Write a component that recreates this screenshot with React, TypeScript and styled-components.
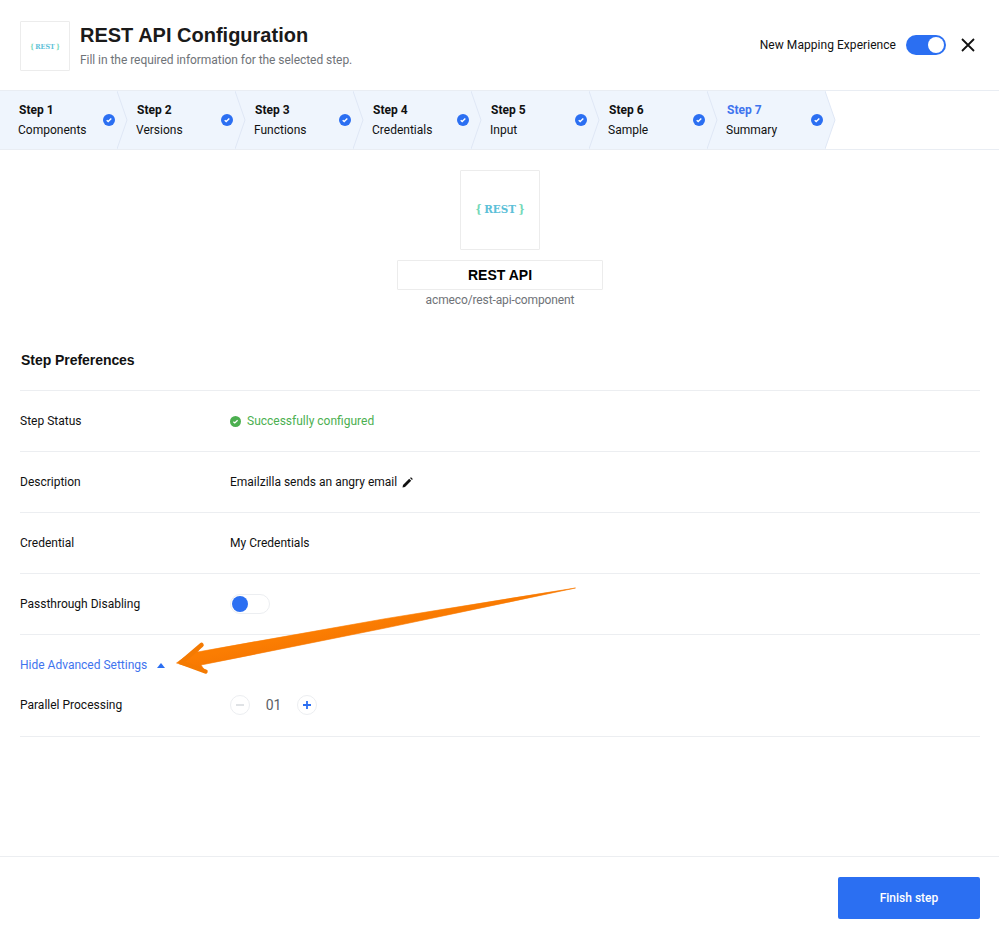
import React from "react";
import styled, { createGlobalStyle } from "styled-components";

const GlobalStyle = createGlobalStyle`
  html, body {
    margin: 0;
    padding: 0;
    background: #fff;
    font-family: Roboto, "Liberation Sans", sans-serif;
    font-size: 12px;
    color: #111;
  }
  * { box-sizing: border-box; }
`;

const Page = styled.div`
  position: relative;
  width: 999px;
  height: 938px;
  display: flex;
  flex-direction: column;
  overflow: hidden;
`;

const Header = styled.header`
  height: 91px;
  flex: none;
  display: flex;
  align-items: flex-start;
  padding: 21px 23px 0 20px;
  border-bottom: 1px solid #e9edf3;
`;

const LogoBox = styled.div<{ $size: number }>`
  width: ${(p) => p.$size}px;
  height: ${(p) => p.$size}px;
  flex: none;
  display: flex;
  align-items: center;
  justify-content: center;
  border: 1px solid #ececec;
  border-radius: 1px;
  background: #fff;
`;

const LogoText = styled.span<{ $size: number }>`
  font-family: "DejaVu Serif", "Liberation Mono", serif;
  font-stretch: condensed;
  font-weight: 700;
  font-size: ${(p) => p.$size}px;
  line-height: 1;
  white-space: pre;
  color: #5cc0d8;
`;

const Brace = styled.span<{ $gap: number; $right?: boolean }>`
  color: #74d8b8;
  ${(p) => (p.$right ? `margin-left: ${p.$gap}px;` : `margin-right: ${p.$gap}px;`)}
`;

const TitleBlock = styled.div`
  margin-left: 10px;
  flex: 1;
`;

const Title = styled.h1`
  margin: 0;
  font-family: "Liberation Sans", Arial, sans-serif;
  font-size: 20px;
  line-height: 28px;
  font-weight: 700;
  color: #1a1a1a;
`;

const Subtitle = styled.div`
  margin-top: 3px;
  line-height: 16px;
  letter-spacing: -0.05px;
  color: #6f7378;
`;

const HeaderActions = styled.div`
  display: flex;
  align-items: center;
  margin-top: 14px;
`;

const Switch = styled.div<{ $on?: boolean }>`
  width: 40px;
  height: 20px;
  flex: none;
  display: flex;
  align-items: center;
  padding: 0 2px;
  border-radius: 10px;
  justify-content: ${(p) => (p.$on ? "flex-end" : "flex-start")};
  background: ${(p) => (p.$on ? "#2b6ff2" : "#fff")};
  border: ${(p) => (p.$on ? "none" : "1px solid #eceef1")};
`;

const Knob = styled.span<{ $on?: boolean }>`
  width: 16px;
  height: 16px;
  border-radius: 50%;
  margin-left: ${(p) => (p.$on ? "0" : "-1px")};
  background: ${(p) => (p.$on ? "#fff" : "#2b6ff2")};
`;

const MappingLabel = styled.span`
  margin-right: 10px;
  letter-spacing: 0.05px;
`;

const CloseButton = styled.button`
  margin-left: 14px;
  width: 16px;
  height: 16px;
  padding: 0;
  display: flex;
  border: none;
  background: none;
`;

const Stepper = styled.nav`
  height: 59px;
  flex: none;
  display: flex;
  border-bottom: 1px solid #e9edf3;
`;

const Step = styled.div`
  position: relative;
  width: 118px;
  height: 58px;
  flex: none;
  display: flex;
  align-items: center;
  justify-content: space-between;
  padding: 0 2px 0 20px;
  background: #eff5fd;

  &:first-child {
    margin-left: -1px;
  }
`;

const StepText = styled.div`
  line-height: 20px;
`;

const StepNumber = styled.div<{ $active?: boolean }>`
  font-weight: 700;
  color: ${(p) => (p.$active ? "#3f74ee" : "#111")};
`;

const StepName = styled.div`
  margin-left: -1px;
`;

const StepCheck = styled.svg`
  position: relative;
  z-index: 2;
  flex: none;
`;

const StepTip = styled.svg`
  position: absolute;
  top: 0;
  left: 100%;
  z-index: 1;
`;

const Main = styled.main`
  flex: 1;
  display: flex;
  flex-direction: column;
  padding: 20px 19px 0 20px;
`;

const Component = styled.section`
  display: flex;
  flex-direction: column;
  align-items: center;
`;

const ComponentName = styled.div`
  width: 206px;
  height: 30px;
  margin-top: 10px;
  display: flex;
  align-items: center;
  justify-content: center;
  border: 1px solid #ececec;
  border-radius: 1px;
  font-family: "Liberation Sans", Arial, sans-serif;
  font-size: 14px;
  font-weight: 700;
  color: #000;
`;

const ComponentPath = styled.div`
  margin-top: 2px;
  line-height: 16px;
  letter-spacing: -0.12px;
  color: #6f7378;
`;

const SectionTitle = styled.h2`
  margin: 42px 0 0;
  height: 41px;
  padding-left: 1px;
  font-family: "Liberation Sans", Arial, sans-serif;
  font-size: 14px;
  line-height: 20px;
  font-weight: 700;
  letter-spacing: -0.05px;
  border-bottom: 1px solid #eceef1;
`;

const Row = styled.div`
  height: 61px;
  display: flex;
  align-items: center;
  border-bottom: 1px solid #eceef1;
`;

const Label = styled.div`
  width: 210px;
  flex: none;
`;

const Value = styled.div`
  display: flex;
  align-items: center;
`;

const StatusText = styled.span`
  margin-left: 6px;
  color: #4caf50;
`;

const EditIcon = styled.svg`
  margin-left: 5px;
`;

const AdvancedToggle = styled.div`
  display: flex;
  align-items: center;
  margin-top: 22px;
  line-height: 16px;
  color: #3f74ee;
`;

const Caret = styled.span`
  margin-left: 10px;
  width: 0;
  height: 0;
  border-left: 4px solid transparent;
  border-right: 4px solid transparent;
  border-bottom: 5px solid #2b6ff2;
`;

const ParallelRow = styled.div`
  height: 64px;
  display: flex;
  align-items: center;
  border-bottom: 1px solid #eceef1;
`;

const RoundButton = styled.button<{ $disabled?: boolean }>`
  width: 20px;
  height: 20px;
  padding: 0;
  display: flex;
  align-items: center;
  justify-content: center;
  border: 1px solid #eceef1;
  border-radius: 50%;
  background: #fff;
  color: ${(p) => (p.$disabled ? "#d5d8dc" : "#2b6ff2")};
`;

const Count = styled.span`
  width: 47px;
  text-align: center;
  font-size: 14px;
  color: #5c6066;
`;

const Footer = styled.footer`
  height: 82px;
  flex: none;
  display: flex;
  justify-content: flex-end;
  align-items: flex-start;
  padding: 20px 19px 0 0;
  border-top: 1px solid #eceef1;
`;

const FinishButton = styled.button`
  width: 142px;
  height: 42px;
  border: none;
  border-radius: 2px;
  background: #2b6ff2;
  color: #fff;
  font-family: inherit;
  font-size: 12px;
  font-weight: 500;
`;

const ArrowOverlay = styled.svg`
  position: absolute;
  left: 0;
  top: 0;
  pointer-events: none;
`;

const steps = ["Components", "Versions", "Functions", "Credentials", "Input", "Sample", "Summary"];

const Check = ({ color, size }: { color: string; size: number }) => (
  <StepCheck width={size} height={size} viewBox="0 0 12 12">
    <circle cx="6" cy="6" r="6" fill={color} />
    <path d="M3.7 6.2 5.2 7.6 8.3 4.6" fill="none" stroke="#fff" strokeWidth="1.4" />
  </StepCheck>
);

const RestLogo = ({ size }: { size: number }) => (
  <LogoText $size={size}>
    <Brace $gap={size / 5}>{"{"}</Brace>
    REST
    <Brace $gap={size / 5} $right>
      {"}"}
    </Brace>
  </LogoText>
);

export default function App() {
  return (
    <Page>
      <GlobalStyle />
      <Header>
        <LogoBox $size={50}>
          <RestLogo size={7} />
        </LogoBox>
        <TitleBlock>
          <Title>REST API Configuration</Title>
          <Subtitle>Fill in the required information for the selected step.</Subtitle>
        </TitleBlock>
        <HeaderActions>
          <MappingLabel>New Mapping Experience</MappingLabel>
          <Switch $on>
            <Knob $on />
          </Switch>
          <CloseButton aria-label="Close">
            <svg width="16" height="16" viewBox="0 0 16 16">
              <path d="M2 2 14 14M14 2 2 14" stroke="#111" strokeWidth="1.8" fill="none" />
            </svg>
          </CloseButton>
        </HeaderActions>
      </Header>

      <Stepper>
        {steps.map((name, i) => (
          <Step key={name}>
            <StepText>
              <StepNumber $active={i === 6}>Step {i + 1}</StepNumber>
              <StepName>{name}</StepName>
            </StepText>
            <Check color="#2b6ff2" size={12} />
            <StepTip width="11" height="58" viewBox="0 0 11 58">
              <path d="M0 0 10 29 0 58Z" fill="#eff5fd" />
              <path d="M0 0 10 29 0 58" fill="none" stroke="#dfe7f5" />
            </StepTip>
          </Step>
        ))}
      </Stepper>

      <Main>
        <Component>
          <LogoBox $size={80}>
            <RestLogo size={11.5} />
          </LogoBox>
          <ComponentName>REST API</ComponentName>
          <ComponentPath>acmeco/rest-api-component</ComponentPath>
        </Component>

        <SectionTitle>Step Preferences</SectionTitle>
        <Row>
          <Label>Step Status</Label>
          <Value>
            <Check color="#4caf50" size={11} />
            <StatusText>Successfully configured</StatusText>
          </Value>
        </Row>
        <Row>
          <Label>Description</Label>
          <Value>
            Emailzilla sends an angry email
            <EditIcon width="11" height="11" viewBox="0 0 11 11">
              <path d="M0.5 10.5 1 8 7.2 1.8 9.2 3.8 3 10ZM8 1 9 0.2 10.8 2 10 3Z" fill="#111" />
            </EditIcon>
          </Value>
        </Row>
        <Row>
          <Label>Credential</Label>
          <Value>My Credentials</Value>
        </Row>
        <Row>
          <Label>Passthrough Disabling</Label>
          <Value>
            <Switch>
              <Knob />
            </Switch>
          </Value>
        </Row>

        <AdvancedToggle>
          Hide Advanced Settings
          <Caret />
        </AdvancedToggle>
        <ParallelRow>
          <Label>Parallel Processing</Label>
          <Value>
            <RoundButton $disabled aria-label="Decrease">
              <svg width="8" height="8" viewBox="0 0 8 8">
                <path d="M0 4H8" stroke="currentColor" strokeWidth="1.5" />
              </svg>
            </RoundButton>
            <Count>01</Count>
            <RoundButton aria-label="Increase">
              <svg width="8" height="8" viewBox="0 0 8 8">
                <path d="M0 4H8M4 0V8" stroke="currentColor" strokeWidth="1.8" />
              </svg>
            </RoundButton>
          </Value>
        </ParallelRow>
      </Main>

      <Footer>
        <FinishButton>Finish step</FinishButton>
      </Footer>

      <ArrowOverlay width="999" height="938" viewBox="0 0 999 938">
        <defs>
          <linearGradient id="arrowFill" gradientUnits="userSpaceOnUse" x1="380" y1="620" x2="390" y2="670">
            <stop offset="0" stopColor="#fb7d02" />
            <stop offset="1" stopColor="#e86700" />
          </linearGradient>
        </defs>
        <path
          d="M575.5 588 Q386 617 197.5 652 L202 645 176.5 663 205.5 671.5 201 665 Q390 628 575.5 588Z"
          fill="url(#arrowFill)"
          stroke="url(#arrowFill)"
          strokeWidth="0.6"
          strokeLinejoin="round"
        />
        <path d="M201.5 645 181 662.5 205.5 671.5" fill="none" stroke="#f47a02" strokeWidth="4.5" strokeLinecap="round" strokeLinejoin="round" />
      </ArrowOverlay>
    </Page>
  );
}
